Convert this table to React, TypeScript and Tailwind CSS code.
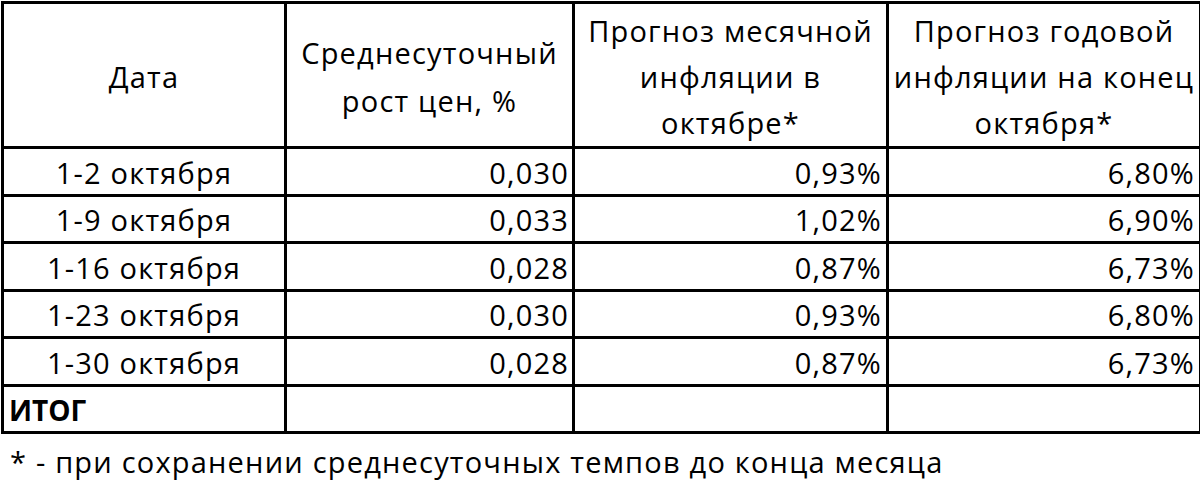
const rows = [
  { date: '1-2 октября', avg: '0,030', month: '0,93%', year: '6,80%' },
  { date: '1-9 октября', avg: '0,033', month: '1,02%', year: '6,90%' },
  { date: '1-16 октября', avg: '0,028', month: '0,87%', year: '6,73%' },
  { date: '1-23 октября', avg: '0,030', month: '0,93%', year: '6,80%' },
  { date: '1-30 октября', avg: '0,028', month: '0,87%', year: '6,73%' },
]

const cell = 'border-[3px] border-black h-[47.5px] p-0 leading-[36px] align-bottom'

export default function App() {
  return (
    <div className="w-[1200px] h-[484px] bg-white text-black font-['Open_Sans','Noto_Sans',sans-serif] text-[29px] tracking-[1.2px] overflow-hidden">
      <table className="border-collapse table-fixed w-[1198px] mt-[1px] ml-[1px]">
        <colgroup>
          <col className="w-[283px]" />
          <col className="w-[288px]" />
          <col className="w-[314px]" />
          <col className="w-[313px]" />
        </colgroup>
        <thead>
          <tr className="h-[143px]">
            <th className="border-[3px] border-black font-normal leading-[46px] align-middle pt-1">Дата</th>
            <th className="border-[3px] border-black font-normal leading-[48px] align-middle pt-1">
              Среднесуточный
              <br />
              рост цен, %
            </th>
            <th className="border-[3px] border-black font-normal leading-[46px] align-middle pt-1">
              Прогноз месячной
              <br />
              инфляции в
              <br />
              октябре*
            </th>
            <th className="border-[3px] border-black font-normal leading-[46px] align-middle pt-1">
              Прогноз годовой
              <br />
              инфляции на конец
              <br />
              октября*
            </th>
          </tr>
        </thead>
        <tbody>
          {rows.map((r) => (
            <tr key={r.date}>
              <td className={`${cell} text-center pb-[3px]`}>{r.date}</td>
              <td className={`${cell} text-right pr-[3px] pb-[3px]`}>{r.avg}</td>
              <td className={`${cell} text-right pr-[4px] pb-[3px]`}>{r.month}</td>
              <td className={`${cell} text-right pr-[4px] pb-[3px]`}>{r.year}</td>
            </tr>
          ))}
          <tr>
            <td className={`${cell} font-bold tracking-normal text-[28px] pl-[5px] pb-[3px]`}>ИТОГ</td>
            <td className={cell}></td>
            <td className={cell}></td>
            <td className={cell}></td>
          </tr>
        </tbody>
      </table>
      <p className="ml-[10px] mt-[8px] leading-[40px] whitespace-nowrap">
        * - при сохранении среднесуточных темпов до конца месяца
      </p>
    </div>
  )
}
